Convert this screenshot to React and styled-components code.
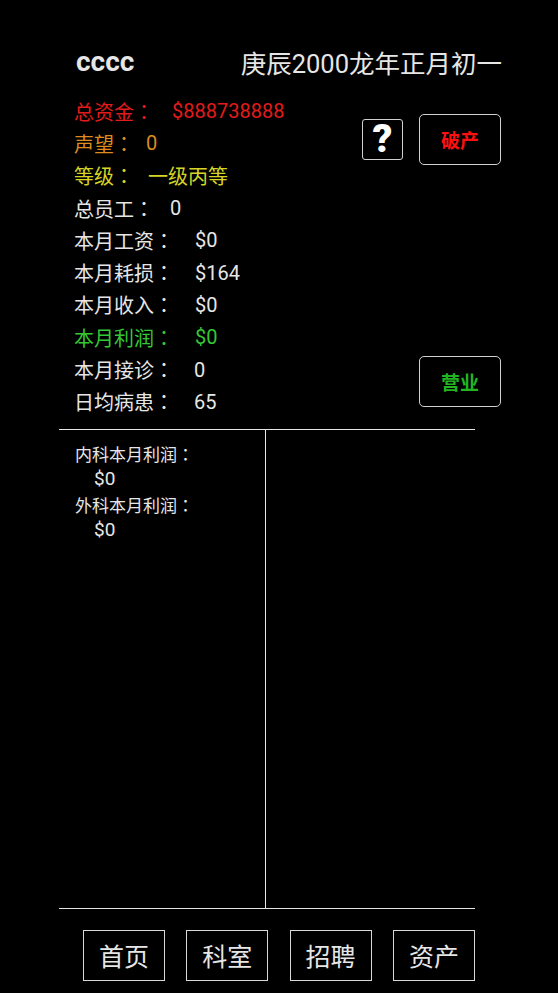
import React from 'react';
import styled, { createGlobalStyle } from 'styled-components';

const GlobalStyle = createGlobalStyle`
  html, body {
    margin: 0;
    padding: 0;
    background: #000;
  }
  body {
    font-family: Roboto, "Noto Sans CJK SC", sans-serif;
    color: #e6e6e6;
  }
`;

const Page = styled.div`
  width: 558px;
  height: 993px;
  background: #000;
  display: flex;
  flex-direction: column;
  overflow: hidden;
`;

const Header = styled.div`
  display: flex;
  justify-content: space-between;
  align-items: center;
  height: 36px;
  margin-top: 43px;
  padding: 0 56px 0 76px;
`;

const Name = styled.div`
  font-size: 28px;
  font-weight: bold;
  color: #e6e6e6;
`;

const DateText = styled.div`
  font-size: 25.5px;
  color: #e6e6e6;
`;

// full-width colon centred in its cell, as on the device
const Colon = styled.span`
  font-family: "Noto Sans CJK TC", sans-serif;
`;

const StatsArea = styled.div`
  display: flex;
  justify-content: space-between;
  margin-top: 16px;
  padding: 0 57px 0 74px;
`;

const StatList = styled.div`
  display: flex;
  flex-direction: column;
`;

const StatRow = styled.div`
  display: flex;
  height: 32.3px;
  align-items: center;
  font-size: 20px;
  color: ${(p) => p.color || '#e6e6e6'};
`;

const StatValue = styled.span`
  margin-left: ${(p) => p.gap}px;
`;

const SideButtons = styled.div`
  display: flex;
  flex-direction: column;
  align-items: flex-end;
  justify-content: space-between;
  padding: 19px 0 11px;
`;

const ButtonRow = styled.div`
  display: flex;
  align-items: center;
  gap: 16px;
`;

const HelpButton = styled.div`
  width: 39px;
  height: 39px;
  border: 1px solid #d0d0d0;
  border-radius: 3px;
  display: flex;
  align-items: center;
  justify-content: center;
  font-size: 39px;
  font-weight: 900;
  line-height: 1;
  color: #fff;
`;

const ActionButton = styled.div`
  width: 80px;
  height: 49px;
  border: 1px solid #d0d0d0;
  border-radius: 5px;
  display: flex;
  align-items: center;
  justify-content: center;
  font-size: 19px;
  font-weight: bold;
  color: ${(p) => p.color};
`;

const Panels = styled.div`
  display: flex;
  width: 416px;
  height: 478px;
  margin: 11px 0 0 59px;
  border-top: 1px solid #e6e6e6;
  border-bottom: 1px solid #e6e6e6;
`;

const PanelLeft = styled.div`
  width: 207px;
  border-right: 1px solid #e6e6e6;
  padding: 11px 0 0 16px;
  box-sizing: border-box;
`;

const PanelRight = styled.div`
  flex: 1;
`;

const ProfitLabel = styled.div`
  display: flex;
  align-items: center;
  height: 25.3px;
  font-size: 17px;
`;

const ProfitValue = styled.div`
  display: flex;
  align-items: center;
  height: 25.3px;
  font-size: 19px;
  padding-left: 19px;
`;

const Nav = styled.div`
  display: flex;
  gap: 21.3px;
  margin: 21px 0 0 83px;
`;

const NavButton = styled.div`
  width: 82px;
  height: 51px;
  box-sizing: border-box;
  border: 1px solid #d8d8d8;
  display: flex;
  align-items: center;
  justify-content: center;
  font-size: 25px;
  color: #e6e6e6;
`;

const stats = [
  { label: '总资金', value: '$888738888', gap: 18, color: '#e31b1b' },
  { label: '声望', value: '0', gap: 12, color: '#dd8a1e' },
  { label: '等级', value: '一级丙等', gap: 14, color: '#d6d424' },
  { label: '总员工', value: '0', gap: 16 },
  { label: '本月工资', value: '$0', gap: 21 },
  { label: '本月耗损', value: '$164', gap: 21 },
  { label: '本月收入', value: '$0', gap: 21 },
  { label: '本月利润', value: '$0', gap: 21, color: '#34c834' },
  { label: '本月接诊', value: '0', gap: 20 },
  { label: '日均病患', value: '65', gap: 20 },
];

const navItems = ['首页', '科室', '招聘', '资产'];

function App() {
  return (
    <Page>
      <GlobalStyle />
      <Header>
        <Name>cccc</Name>
        <DateText>庚辰2000龙年正月初一</DateText>
      </Header>
      <StatsArea>
        <StatList>
          {stats.map((s) => (
            <StatRow key={s.label} color={s.color}>
              <span>{s.label}<Colon>：</Colon></span>
              <StatValue gap={s.gap}>{s.value}</StatValue>
            </StatRow>
          ))}
        </StatList>
        <SideButtons>
          <ButtonRow>
            <HelpButton>?</HelpButton>
            <ActionButton color="#ff1010">破产</ActionButton>
          </ButtonRow>
          <ActionButton color="#22b422">营业</ActionButton>
        </SideButtons>
      </StatsArea>
      <Panels>
        <PanelLeft>
          <ProfitLabel>内科本月利润<Colon>：</Colon></ProfitLabel>
          <ProfitValue>$0</ProfitValue>
          <ProfitLabel>外科本月利润<Colon>：</Colon></ProfitLabel>
          <ProfitValue>$0</ProfitValue>
        </PanelLeft>
        <PanelRight />
      </Panels>
      <Nav>
        {navItems.map((n) => (
          <NavButton key={n}>{n}</NavButton>
        ))}
      </Nav>
    </Page>
  );
}

export default App;
